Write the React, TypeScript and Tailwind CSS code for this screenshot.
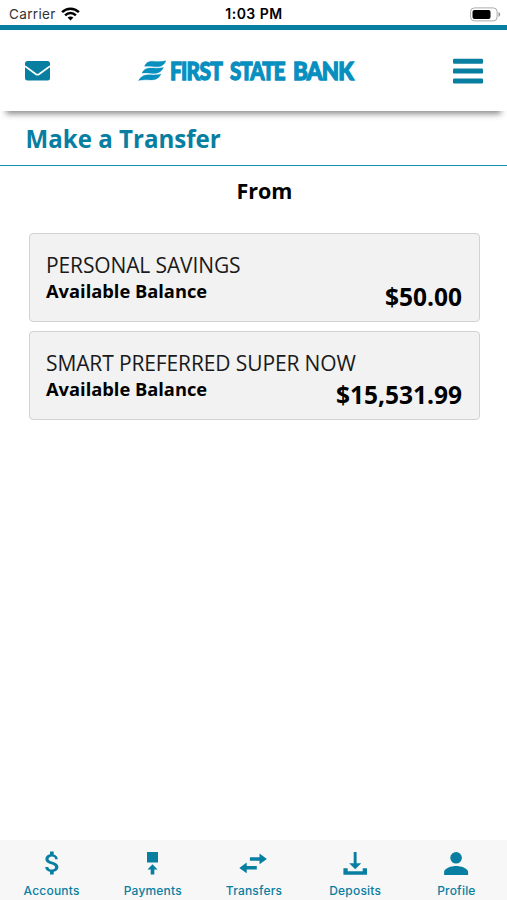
import React from "react";

interface Account {
  id: number;
  name: string;
  balance: string;
}

interface NavItem {
  label: string;
  icon: React.ReactNode;
}

const accounts: Account[] = [
  { id: 1, name: "PERSONAL SAVINGS", balance: "$50.00" },
  { id: 2, name: "SMART PREFERRED SUPER NOW", balance: "$15,531.99" },
];

const navItems: NavItem[] = [
  {
    label: "Accounts",
    icon: (
      <path d="M14.400 11.800c-2.600-.7-3.800-1.500-3.800-2.800 0-1.500 1.300-2.500 3.300-2.500 2.200 0 3.100 1.100 3.200 2.700h2.700c-.1-2.300-1.500-4.200-4.100-4.800V1.500h-3.700v2.800C9.600 4.800 7.400 6.500 7.400 9c0 2.900 2.700 4.400 6.100 5.300 3 .8 3.600 1.900 3.600 3 0 .9-.6 2.300-3.200 2.300-2.400 0-3.400-1.200-3.600-2.700H7.200c.1 2.800 2.500 4.400 4.800 4.900v2.700h3.700v-2.700c2.400-.5 4.700-1.900 4.700-4.500 0-3.500-3.300-4.700-6-5.500z" />
    ),
  },
  {
    label: "Payments",
    icon: <path d="M8 2H19V12.600H8zM13.500 14.200l5 5.200h-3.200v5h-3.600v-5H8.500z" />,
  },
  {
    label: "Transfers",
    icon: (
      <path d="M9.900 7.200h9.600V3.600l7.400 5.300-7.400 5.300v-3.500H9.900zM16.800 16.100v3.500H6.700v3.600L-.7 17.900l7.400-5.300v3.500z" />
    ),
  },
  {
    label: "Deposits",
    icon: (
      <path d="M11.700 2h2.900v11.300h4.600l-6 6-6-6h4.500zM1.400 18.200h4.300v3.100h15v-3.100H25v6.600H1.400z" />
    ),
  },
  {
    label: "Profile",
    icon: (
      <path d="M13.100 2a5.800 5.800 0 1 1 0 11.600 5.800 5.800 0 0 1 0-11.600zM1.100 24.900v-3c0-3.900 7.600-6 12-6s12 2.100 12 6v3z" />
    ),
  },
];

const StatusBar = () => (
  <div className="grid h-[25px] shrink-0 grid-cols-3 items-center pt-[3px] font-['Inter',sans-serif] text-black">
    <div className="flex items-center gap-[5px] pl-[9px]">
      <span className="text-[13.500px] leading-5 tracking-[0.350px] text-[#333]">Carrier</span>
      <svg width="19" height="14" viewBox="0 0 19 14" fill="none" stroke="black" strokeWidth="2.500">
        <path d="M1.100 5.200C5.900.5 13.100.5 17.900 5.200M4.100 8.300c3.100-3 7.700-3 10.800 0" />
        <path d="M6.600 10.600c1.800-1.500 4-1.500 5.800 0L9.500 13.600z" fill="black" stroke="none" />
      </svg>
    </div>
    <div className="pl-[1px] text-center text-[14px] leading-5 font-semibold tracking-[0.500px]">
      1:03 PM
    </div>
    <div className="flex justify-end pr-[6px]">
      <svg width="31" height="15" viewBox="0 0 31 15">
        <rect x="0.600" y="0.900" width="26.500" height="13" rx="3.800" fill="white" stroke="#aaa" />
        <rect x="2.500" y="2.900" width="18" height="9" rx="2" fill="black" />
        <path d="M28.500 5v4.800c2.300-.8 2.300-4 0-4.800z" fill="#999" />
      </svg>
    </div>
  </div>
);

const Logo = () => (
  <svg
    width="230"
    height="40"
    viewBox="0 0 230 40"
    className="fill-[#078fbf] font-['Lato',sans-serif] text-[25.500px] font-black"
    stroke="#078fbf"
    strokeWidth="1.300"
  >
    <g strokeWidth="0.300">
      <path d="M6.500 15.300C10.500 6.500 17 12.500 28 9.800 23.500 19.500 16.500 14.300 6.500 15.300z" />
      <path d="M4 22.100C8.500 13.500 15 19 25.500 16.500 20.500 26 14 20.800 4 22.100z" />
      <path d="M.5 29.600C6 20.300 13 25.800 23 23 18.300 32.300 11.500 27.200.5 29.600z" />
    </g>
    <text x="32" y="28.500" textLength="52" lengthAdjust="spacingAndGlyphs" letterSpacing="-0.900">
      FIRST
    </text>
    <text x="92" y="28.500" textLength="54.500" lengthAdjust="spacingAndGlyphs" letterSpacing="-1.200">
      STATE
    </text>
    <text x="155" y="28.500" textLength="60" lengthAdjust="spacingAndGlyphs" letterSpacing="-0.900">
      BANK
    </text>
  </svg>
);

const Header = () => (
  <header className="relative h-[86px] shrink-0 border-t-[5px] border-[#087ea1] bg-white shadow-[0_9px_6px_-6px_rgba(0,0,0,0.45)]">
    <div className="grid h-full grid-cols-[113px_1fr_auto] items-center pr-[24px] pl-[25px]">
      <svg width="25" height="20" viewBox="0 0 25 20" fill="#087ea1">
        <rect width="25" height="19.500" rx="2.500" />
        <path d="M0 5.200l11 8q1.500 1 3 0l11-8" fill="none" stroke="white" strokeWidth="1.800" />
      </svg>
      <Logo />
      <svg width="30" height="26" viewBox="0 0 30 26" fill="#087ea1">
        <rect y="0.800" width="30" height="5" rx="1.200" />
        <rect y="10.600" width="30" height="5" rx="1.200" />
        <rect y="20.400" width="30" height="5" rx="1.200" />
      </svg>
    </div>
  </header>
);

const AccountCard = ({ name, balance }: Account) => (
  <button className="flex h-[89px] w-full flex-col rounded-[4px] border border-[#d2d2d2] bg-[#f2f2f2] pt-[17px] pr-[17px] pl-[16px] text-left text-black">
    <span className="text-[21px] leading-[28px] tracking-[-0.120px] text-[#1a1a1a]">{name}</span>
    <span className="flex w-full justify-between">
      <span className="text-[18.300px] leading-[24px] font-bold">Available Balance</span>
      <span className="pt-[2px] text-[24.500px] leading-[31px] font-bold">{balance}</span>
    </span>
  </button>
);

const BottomNav = () => (
  <nav className="grid h-[60px] shrink-0 grid-cols-5 bg-[#f7f7f7] pt-[10px] pl-[1px] text-[#087ea1]">
    {navItems.map((item) => (
      <div key={item.label} className="flex flex-col items-center">
        <svg width="27" height="27" viewBox="0 0 27 27" fill="currentColor" className="overflow-visible">
          {item.icon}
        </svg>
        <span className="pt-[4px] font-['Inter',sans-serif] text-[12px] leading-[20px] font-medium tracking-[0.200px]">
          {item.label}
        </span>
      </div>
    ))}
  </nav>
);

export default function App() {
  return (
    <div className="flex h-screen w-full flex-col overflow-hidden bg-white font-['Open_Sans',sans-serif]">
      <StatusBar />
      <Header />
      <h1 className="h-[54px] shrink-0 pt-[10px] pl-[25.500px] text-[24.100px] leading-[36px] font-bold text-[#087ea1]">
        Make a Transfer
      </h1>
      <div className="h-px shrink-0 bg-[#1590b5]" />
      <main className="flex-1 pr-[27px] pl-[29px]">
        <h2 className="pt-[10px] pb-[27px] pl-[20px] text-center text-[21.500px] leading-[30px] font-bold text-black">
          From
        </h2>
        <div className="flex flex-col gap-[9px]">
          {accounts.map((account) => (
            <AccountCard key={account.id} {...account} />
          ))}
        </div>
      </main>
      <BottomNav />
    </div>
  );
}
